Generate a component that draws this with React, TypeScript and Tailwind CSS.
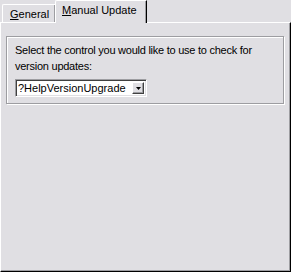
import React from "react";

export default function App() {
  return (
    <div className="w-[291px] h-[272px] bg-[#e0dfe3] flex flex-col font-['Liberation_Sans',Arial,sans-serif] text-[11px] text-black select-none">
      {/* tab strip */}
      <div className="flex items-end h-[22px] pl-[2px]">
        <div className="w-[53px] h-[18px] border-l border-t border-white rounded-tl-[2px] shadow-[inset_-1px_0_0_#9d9da1] pl-[7px] pt-[2px] leading-[14px]">
          <span className="underline underline-offset-[1px]">G</span>eneral
        </div>
        <div className="relative z-10 -mb-px w-[92px] h-[23px] bg-[#e0dfe3] border-l border-t border-r border-l-white border-t-white border-r-black rounded-tl-[2px] shadow-[inset_-1px_0_0_#9d9da1] pl-[6px] pt-[2px] leading-[14px]">
          <span className="underline underline-offset-[1px]">M</span>anual Update
        </div>
      </div>

      {/* tab page */}
      <div className="flex-1 border border-l-white border-t-white border-r-black border-b-black shadow-[inset_-1px_-1px_0_#9d9da1] pt-[13px]">
        <div className="ml-[5px] mr-[6px] border border-[#9d9da1] shadow-[1px_1px_0_#fff,inset_1px_1px_0_#fff] pl-[8px] pt-[5px] pb-[6px]">
          <p className="leading-[16px] tracking-[-0.25px]">
            Select the control you would like to use to check for version updates:
          </p>
          <div className="mt-[5px] w-[132px] h-[18px] flex items-center border border-t-[#9d9da1] border-l-[#9d9da1] border-r-white border-b-white bg-white shadow-[inset_1px_1px_0_#404040,inset_-1px_-1px_0_#e0dfe3]">
            <span className="pl-[2px] leading-[14px]">?HelpVersionUpgrade</span>
            <div className="ml-auto mr-[2px] w-[12px] h-[12px] bg-[#e0dfe3] border border-t-white border-l-white border-r-[#404040] border-b-[#404040] shadow-[inset_-1px_-1px_0_#9d9da1] flex items-center justify-center">
              <svg width="5" height="3" viewBox="0 0 5 3">
                <path d="M0 0h5L2.5 3z" fill="#000" />
              </svg>
            </div>
          </div>
        </div>
      </div>
    </div>
  );
}
